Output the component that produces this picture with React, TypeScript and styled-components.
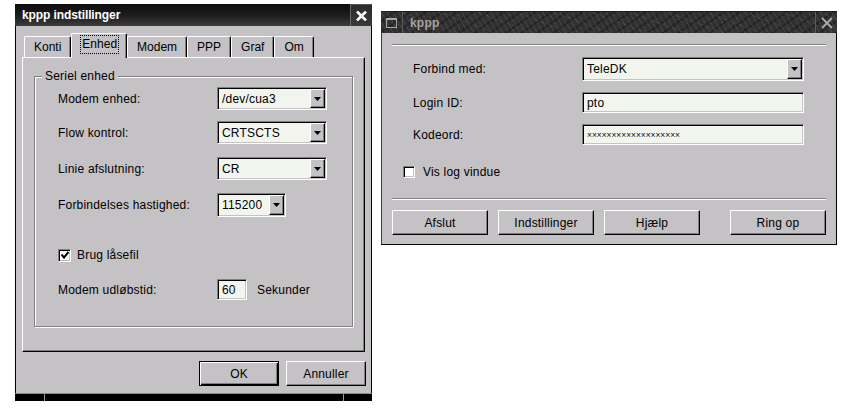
import React from 'react';
import styled, { createGlobalStyle, css } from 'styled-components';

const GRAY = '#c4c2c4';
const FIELD = '#f1f5ed';

const Global = createGlobalStyle`
  html, body { margin: 0; padding: 0; background: #fff; }
  body { font-family: "Liberation Sans", Arial, sans-serif; font-size: 12px; letter-spacing: 0.2px; color: #000; }
  * { box-sizing: border-box; }
`;

const Page = styled.div`
  display: flex;
  align-items: flex-start;
  gap: 9px;
  padding: 4px 0 0 15px;
  width: 847px;
  height: 414px;
`;

/* ---------- shared widgets ---------- */

const sunken = css`
  border: 1px solid;
  border-color: #808080 #fff #fff #808080;
  box-shadow: inset 1px 1px 0 #000, inset -1px -1px 0 ${GRAY};
  background: ${FIELD};
`;

const Field = styled.div<{ $w: number; $h: number }>`
  ${sunken};
  width: ${p => p.$w}px;
  height: ${p => p.$h}px;
  display: flex;
  align-items: center;
  padding: 1px 1px 1px 4px;
  white-space: nowrap;
`;

const FieldText = styled.span`
  flex: 1;
  line-height: 14px;
`;

const Dots = styled.span`
  flex: 1;
  font-size: 8.4px;
  letter-spacing: 0;
  line-height: 10px;
`;

const ArrowBtn = styled.div`
  width: 15px;
  align-self: stretch;
  background: ${GRAY};
  border: 1px solid;
  border-color: #fff #000 #000 #fff;
  box-shadow: inset -1px -1px 0 #808080;
  display: flex;
  align-items: center;
  justify-content: center;
`;

const Arrow = () => (
  <svg width="7" height="4" viewBox="0 0 7 4">
    <polygon points="0,0 7,0 3.5,4" fill="#000" />
  </svg>
);

const Combo: React.FC<{ w: number; h: number; value: string }> = ({ w, h, value }) => (
  <Field $w={w} $h={h}>
    <FieldText>{value}</FieldText>
    <ArrowBtn>
      <Arrow />
    </ArrowBtn>
  </Field>
);

const Btn = styled.div<{ $w: number; $default?: boolean }>`
  width: ${p => p.$w}px;
  height: 25px;
  background: ${GRAY};
  border: 1px solid;
  border-color: #fff #000 #000 #fff;
  box-shadow: inset -1px -1px 0 #808080;
  display: flex;
  align-items: center;
  justify-content: center;
  ${p =>
    p.$default &&
    css`
      border-color: #000;
      box-shadow: inset 1px 1px 0 #fff, inset -1px -1px 0 #000, inset -2px -2px 0 #808080;
    `}
`;

const CheckBox = styled.div<{ $size: number }>`
  ${sunken};
  background: #fff;
  width: ${p => p.$size}px;
  height: ${p => p.$size}px;
  display: flex;
  align-items: center;
  justify-content: center;
`;

const Check = () => (
  <svg width="8" height="8" viewBox="0 0 8 8">
    <polyline points="0.5,3.5 3,6.5 7.5,1" fill="none" stroke="#000" strokeWidth="2" />
  </svg>
);

const CheckRow = styled.div<{ $mt: number; $pl: number; $gap: number }>`
  display: flex;
  align-items: center;
  gap: ${p => p.$gap}px;
  margin-top: ${p => p.$mt}px;
  padding-left: ${p => p.$pl}px;
`;

const Separator = styled.div<{ $mt: number }>`
  height: 2px;
  margin-top: ${p => p.$mt}px;
  border-top: 1px solid #808080;
  border-bottom: 1px solid #fff;
`;

/* ---------- left window ---------- */

const LeftWin = styled.div`
  width: 357px;
  height: 397px;
  display: flex;
  flex-direction: column;
  background: ${GRAY};
  border-left: 1px solid #000;
  border-right: 1px solid #000;
`;

const DarkTitle = styled.div`
  height: 22px;
  display: flex;
  align-items: stretch;
  background: linear-gradient(#0c0c0c, #1c1c1c 50%, #3c3c3c);
  margin: 0 -1px;
`;

const DarkTitleText = styled.div`
  flex: 1;
  display: flex;
  align-items: center;
  padding-left: 7px;
  color: #fff;
  font-weight: bold;
  font-size: 12px;
  letter-spacing: -0.1px;
`;

const CloseBox = styled.div`
  width: 22px;
  display: flex;
  align-items: center;
  justify-content: center;
  border-left: 1px solid #6a6a6a;
  border-top: 1px solid #555;
  background: linear-gradient(#2a2a2a, #3a3a3a);
`;

const LeftBody = styled.div`
  flex: 1;
  display: flex;
  flex-direction: column;
  padding: 7px 6px 0 6px;
`;

const Tabs = styled.div`
  height: 24px;
  display: flex;
  align-items: flex-end;
  padding-left: 2px;
  position: relative;
  z-index: 1;
  letter-spacing: 0;
`;

const Tab = styled.div<{ $active?: boolean }>`
  height: 21px;
  padding: 0 9px;
  display: flex;
  align-items: center;
  background: ${GRAY};
  border-left: 1px solid #fff;
  border-top: 1px solid #fff;
  border-right: 1px solid #000;
  border-radius: 2px 2px 0 0;
  box-shadow: inset -1px 0 0 #808080;
  ${p =>
    p.$active &&
    css`
      height: 25px;
      margin-bottom: -1px;
      padding: 0 9px 3px 10px;
    `}
`;

const Focus = styled.span`
  outline: 1px dotted #000;
  outline-offset: 1px;
  line-height: 15px;
`;

const Panel = styled.div`
  height: 295px;
  border: 1px solid;
  border-color: #fff #000 #000 #fff;
  box-shadow: inset -1px -1px 0 #808080;
  padding: 18px 11px 0 11px;
`;

const Group = styled.div`
  position: relative;
  height: 251px;
  border: 1px solid #808080;
  box-shadow: inset 1px 1px 0 #fff, 1px 1px 0 #fff;
  padding: 10px 0 0 23px;
`;

const Legend = styled.span`
  position: absolute;
  top: -8px;
  left: 7px;
  padding: 0 3px;
  background: ${GRAY};
  line-height: 14px;
`;

const FormRow = styled.div<{ $mt: number; $col: number }>`
  display: grid;
  grid-template-columns: ${p => p.$col}px auto;
  align-items: center;
  margin-top: ${p => p.$mt}px;
`;

const Inline = styled.div`
  display: flex;
  align-items: center;
  gap: 10px;
`;

const ButtonBar = styled.div`
  display: flex;
  justify-content: flex-end;
  gap: 7px;
  margin: 9px -1px 0 0;
`;

const BottomFrame = styled.div`
  height: 8px;
  background: #000;
  border-top: 1px solid #8a8a8a;
  margin: auto -1px 0;
  display: flex;
`;

const FrameSeg = styled.div<{ $w?: number }>`
  ${p => (p.$w ? `width: ${p.$w}px;` : 'flex: 1;')}
  & + & {
    border-left: 1px solid #9a9a9a;
  }
`;

/* ---------- right window ---------- */

const RightWin = styled.div`
  width: 456px;
  height: 234px;
  margin-top: 7px;
  display: flex;
  flex-direction: column;
  background: ${GRAY};
  border-left: 1px solid #3a3a3a;
  border-right: 1px solid #000;
  border-bottom: 1px solid #000;
`;

const TexTitle = styled.div`
  height: 22px;
  display: flex;
  align-items: stretch;
  margin: 0 -1px;
  background-color: #303030;
  background-image: repeating-linear-gradient(
      60deg,
      rgba(255, 255, 255, 0.09) 0 1px,
      transparent 1px 5px
    ),
    repeating-linear-gradient(
      -35deg,
      rgba(0, 0, 0, 0.28) 0 2px,
      transparent 2px 9px
    ),
    repeating-linear-gradient(
      20deg,
      rgba(255, 255, 255, 0.05) 0 1px,
      transparent 1px 13px
    );
  border-top: 1px solid #1a1a1a;
`;

const IconBox = styled.div`
  width: 22px;
  display: flex;
  align-items: center;
  justify-content: center;
  border-right: 1px solid #5c5c5c;
`;

const WinIcon = styled.div`
  width: 11px;
  height: 10px;
  border: 1px solid #a8a8a8;
  border-top-width: 2px;
`;

const TexTitleText = styled.div`
  flex: 1;
  display: flex;
  align-items: center;
  padding-left: 7px;
  color: #a4a4a4;
  font-weight: bold;
  font-size: 12px;
`;

const XBox = styled.div`
  width: 22px;
  display: flex;
  align-items: center;
  justify-content: center;
  border-left: 1px solid #5c5c5c;
`;

const RightBody = styled.div`
  flex: 1;
  display: flex;
  flex-direction: column;
  padding: 11px 10px 0 10px;
`;

const RForm = styled.div`
  padding-left: 21px;
`;

const RButtons = styled.div`
  display: flex;
  gap: 10px;
  margin-top: 10px;
  & > :last-child {
    margin-left: auto;
  }
`;

export default function App() {
  return (
    <>
      <Global />
      <Page>
        <LeftWin>
          <DarkTitle>
            <DarkTitleText>kppp indstillinger</DarkTitleText>
            <CloseBox>
              <svg width="11" height="10" viewBox="0 0 11 10">
                <path d="M1 0.5 L10 9.5 M10 0.5 L1 9.5" stroke="#fff" strokeWidth="2.6" />
              </svg>
            </CloseBox>
          </DarkTitle>
          <LeftBody>
            <Tabs>
              <Tab>Konti</Tab>
              <Tab $active>
                <Focus>Enhed</Focus>
              </Tab>
              <Tab>Modem</Tab>
              <Tab>PPP</Tab>
              <Tab>Graf</Tab>
              <Tab>Om</Tab>
            </Tabs>
            <Panel>
              <Group>
                <Legend>Seriel enhed</Legend>
                <FormRow $mt={0} $col={159}>
                  <span>Modem enhed:</span>
                  <Combo w={110} h={23} value="/dev/cua3" />
                </FormRow>
                <FormRow $mt={11} $col={159}>
                  <span>Flow kontrol:</span>
                  <Combo w={110} h={23} value="CRTSCTS" />
                </FormRow>
                <FormRow $mt={13} $col={159}>
                  <span>Linie afslutning:</span>
                  <Combo w={110} h={23} value="CR" />
                </FormRow>
                <FormRow $mt={13} $col={159}>
                  <span>Forbindelses hastighed:</span>
                  <Combo w={69} h={24} value="115200" />
                </FormRow>
                <CheckRow $mt={31} $pl={0} $gap={6}>
                  <CheckBox $size={13}>
                    <Check />
                  </CheckBox>
                  <span>Brug låsefil</span>
                </CheckRow>
                <FormRow $mt={17} $col={159}>
                  <span>Modem udløbstid:</span>
                  <Inline>
                    <Field $w={30} $h={21}>
                      <FieldText>60</FieldText>
                    </Field>
                    <span>Sekunder</span>
                  </Inline>
                </FormRow>
              </Group>
            </Panel>
            <ButtonBar>
              <Btn $w={80} $default>
                OK
              </Btn>
              <Btn $w={80}>Annuller</Btn>
            </ButtonBar>
          </LeftBody>
          <BottomFrame>
            <FrameSeg $w={29} />
            <FrameSeg />
            <FrameSeg $w={29} />
          </BottomFrame>
        </LeftWin>

        <RightWin>
          <TexTitle>
            <IconBox>
              <WinIcon />
            </IconBox>
            <TexTitleText>kppp</TexTitleText>
            <XBox>
              <svg width="12" height="12" viewBox="0 0 12 12">
                <path d="M1 1 L11 11 M11 1 L1 11" stroke="#a8a8a8" strokeWidth="1.8" />
              </svg>
            </XBox>
          </TexTitle>
          <RightBody>
            <Separator $mt={0} />
            <RForm>
              <FormRow $mt={11} $col={169}>
                <span>Forbind med:</span>
                <Combo w={222} h={24} value="TeleDK" />
              </FormRow>
              <FormRow $mt={11} $col={169}>
                <span>Login ID:</span>
                <Field $w={222} $h={21}>
                  <FieldText>pto</FieldText>
                </Field>
              </FormRow>
              <FormRow $mt={11} $col={169}>
                <span>Kodeord:</span>
                <Field $w={222} $h={21}>
                  <Dots>{'×'.repeat(19)}</Dots>
                </Field>
              </FormRow>
            </RForm>
            <CheckRow $mt={20} $pl={11} $gap={8}>
              <CheckBox $size={12} />
              <span>Vis log vindue</span>
            </CheckRow>
            <Separator $mt={19} />
            <RButtons>
              <Btn $w={96}>Afslut</Btn>
              <Btn $w={96}>Indstillinger</Btn>
              <Btn $w={96}>Hjælp</Btn>
              <Btn $w={96}>Ring op</Btn>
            </RButtons>
          </RightBody>
        </RightWin>
      </Page>
    </>
  );
}
